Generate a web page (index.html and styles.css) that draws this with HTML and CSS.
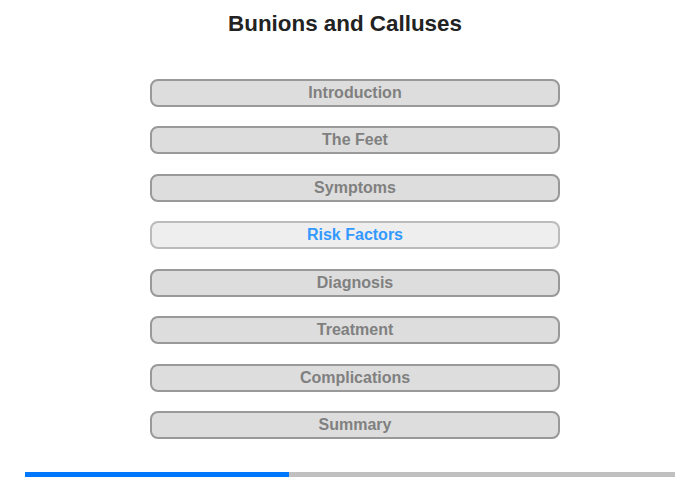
FILE: index.html
```html
<!DOCTYPE html>
<html>
<head>
<meta charset="utf-8">
<link rel="stylesheet" href="styles.css">
</head>
<body>
<div class="page">
  <h1 class="title">Bunions and Calluses</h1>
  <nav class="menu">
    <div class="item">Introduction</div>
    <div class="item">The Feet</div>
    <div class="item">Symptoms</div>
    <div class="item active">Risk Factors</div>
    <div class="item">Diagnosis</div>
    <div class="item">Treatment</div>
    <div class="item">Complications</div>
    <div class="item">Summary</div>
  </nav>
  <div class="progress"><div class="fill" style="width:264px"></div></div>
</div>
</body>
</html>
```
FILE: styles.css
```css
html, body { margin: 0; padding: 0; background: #fff; }
.page {
  width: 700px;
  height: 480px;
  display: flex;
  flex-direction: column;
  align-items: center;
  font-family: "Liberation Sans", Arial, sans-serif;
}
.title {
  margin: 11px 0 0;
  padding-right: 10px;
  font-size: 22.4px;
  line-height: 26px;
  font-weight: bold;
  color: #222;
}
.menu {
  margin-top: 41.5px;
  margin-left: 10px;
  display: flex;
  flex-direction: column;
  gap: 19.5px;
}
.item {
  box-sizing: border-box;
  width: 410px;
  height: 28px;
  border: 2px solid #999;
  border-radius: 8px;
  background: #ddd;
  color: #808080;
  font-size: 16px;
  font-weight: bold;
  line-height: 24px;
  text-align: center;
}
.item.active {
  border-color: #bbb;
  background: #eee;
  color: #3399ff;
}
.progress {
  margin-top: 33px;
  width: 650px;
  height: 5px;
  background: #c0c0c0;
  display: flex;
}
.fill { height: 100%; background: #0077ff; }
```
